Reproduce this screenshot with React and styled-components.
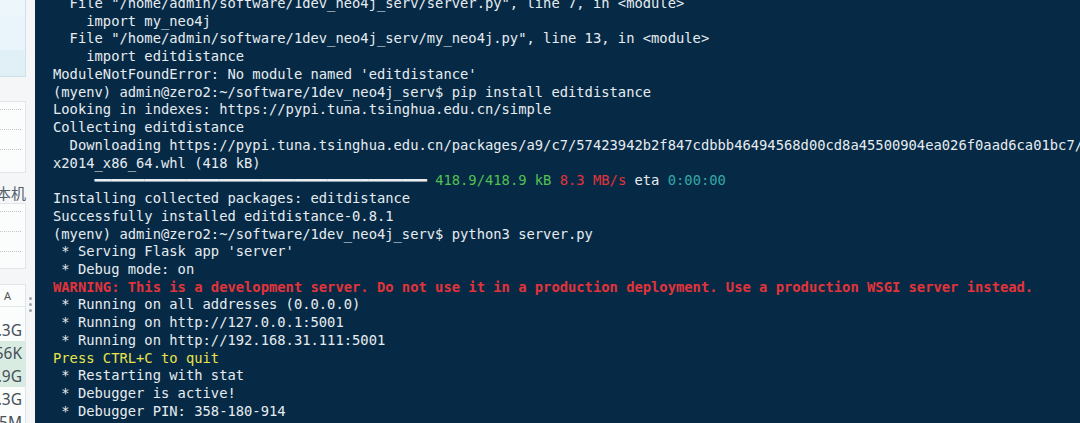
import React from 'react';
import styled, { createGlobalStyle } from 'styled-components';

const GlobalStyle = createGlobalStyle`
  html, body {
    margin: 0;
    padding: 0;
    background: #062a45;
  }
`;

const Page = styled.div`
  display: flex;
  width: 1080px;
  height: 423px;
  overflow: hidden;
`;

// left strip: the edge of a file manager window, cut off by the terminal
const SideStrip = styled.div`
  display: flex;
  flex: 0 0 35px;
  background: #f4f6f8;
  overflow: hidden;
`;

const SideColumn = styled.div`
  display: flex;
  flex-direction: column;
  align-items: flex-end;
  width: 26px;
  font-family: "Noto Sans", "Noto Sans CJK SC", sans-serif;
  color: #4a525b;
`;

const Gutter = styled.div`
  flex: 1;
  display: flex;
  flex-direction: column;
  align-items: center;
  padding-top: 297px;
  gap: 3px;
`;

const GripDot = styled.span`
  width: 3px;
  height: 3px;
  border-radius: 50%;
  background: #9aa3ab;
`;

const SelectedPanel = styled.div`
  flex: 0 0 auto;
  width: 80px;
  height: 76px;
  display: flex;
  flex-direction: column;
  background: #e4f1f8;
  border-right: 1px solid #cfe0ea;
  border-bottom: 1px solid #cfe0ea;
`;

const PanelBand = styled.div`
  height: ${(p) => p.h}px;
  background: ${(p) => p.bg};
`;

const FieldBox = styled.div`
  flex: 0 0 auto;
  width: 80px;
  height: ${(p) => p.h}px;
  margin-top: ${(p) => p.mt}px;
  box-sizing: border-box;
  display: flex;
  flex-direction: column;
  align-items: flex-end;
  gap: 19px;
  padding: 7px 4px 0 0;
  background: #fbfcfc;
  border: 1px solid #e2e6e9;
`;

const DottedLine = styled.div`
  width: 22px;
  border-top: 1px dotted #bfc6cc;
`;

const SideLabel = styled.div`
  margin-top: 10px;
  font-size: 15px;
  line-height: 20px;
  color: #56606a;
  white-space: nowrap;
`;

const SizeTable = styled.div`
  margin-top: 15px;
  width: 80px;
  display: flex;
  flex-direction: column;
  border-top: 1px solid #e1e5e8;
  border-right: 1px solid #e1e5e8;
  background: #fbfcfc;
`;

const SizeHeader = styled.div`
  height: 21px;
  display: flex;
  align-items: center;
  justify-content: flex-end;
  padding-right: 14px;
  font-size: 11px;
  color: #555;
  border-bottom: 1px solid #e4e7ea;
  margin-bottom: 11px;
`;

const SizeRow = styled.div`
  height: 23px;
  display: flex;
  align-items: center;
  justify-content: flex-end;
  padding-right: 3px;
  font-size: 15.5px;
  color: #474f58;
  white-space: nowrap;
  background: ${(p) => (p.hl ? '#d9ece2' : 'transparent')};
`;

// terminal
const Terminal = styled.div`
  flex: 1;
  background: #062a45;
  padding-left: 18px;
  overflow: hidden;
`;

const Screen = styled.div`
  margin-top: -5px;
  font-family: "DejaVu Sans Mono", "Liberation Mono", monospace;
  font-size: 13.8px;
  line-height: 17.74px;
  color: #e6ecf1;
`;

const Line = styled.div`
  white-space: pre;
  height: 17.74px;
`;

const Seg = styled.span`
  color: ${(p) => p.color || 'inherit'};
  font-weight: ${(p) => (p.bold ? 700 : 400)};
`;

const RED = '#e3333a';
const GREEN = '#52c152';
const TEAL = '#33a7a6';
const YELLOW = '#e9e24c';
const BAR = '#e8eef2';

const bar = '━'.repeat(40);

const lines = [
  [{ t: '  File "/home/admin/software/1dev_neo4j_serv/server.py", line 7, in <module>' }],
  [{ t: '    import my_neo4j' }],
  [{ t: '  File "/home/admin/software/1dev_neo4j_serv/my_neo4j.py", line 13, in <module>' }],
  [{ t: '    import editdistance' }],
  [{ t: "ModuleNotFoundError: No module named 'editdistance'" }],
  [{ t: '(myenv) admin@zero2:~/software/1dev_neo4j_serv$ pip install editdistance' }],
  [{ t: 'Looking in indexes: https://pypi.tuna.tsinghua.edu.cn/simple' }],
  [{ t: 'Collecting editdistance' }],
  [{ t: '  Downloading https://pypi.tuna.tsinghua.edu.cn/packages/a9/c7/57423942b2f847cdbbb46494568d00cd8a45500904ea026f0aad6ca01bc7/editdistance-0.8.1-cp311-cp311-manylinux_2_17_x86_64.manylinu' }],
  [{ t: 'x2014_x86_64.whl (418 kB)' }],
  [
    { t: '     ' },
    { t: bar, color: BAR },
    { t: ' ' },
    { t: '418.9/418.9 kB', color: GREEN },
    { t: ' ' },
    { t: '8.3 MB/s', color: RED },
    { t: ' eta ' },
    { t: '0:00:00', color: TEAL },
  ],
  [{ t: 'Installing collected packages: editdistance' }],
  [{ t: 'Successfully installed editdistance-0.8.1' }],
  [{ t: '(myenv) admin@zero2:~/software/1dev_neo4j_serv$ python3 server.py' }],
  [{ t: " * Serving Flask app 'server'" }],
  [{ t: ' * Debug mode: on' }],
  [{ t: 'WARNING: This is a development server. Do not use it in a production deployment. Use a production WSGI server instead.', color: RED, bold: true }],
  [{ t: ' * Running on all addresses (0.0.0.0)' }],
  [{ t: ' * Running on http://127.0.0.1:5001' }],
  [{ t: ' * Running on http://192.168.31.111:5001' }],
  [{ t: 'Press CTRL+C to quit', color: YELLOW }],
  [{ t: ' * Restarting with stat' }],
  [{ t: ' * Debugger is active!' }],
  [{ t: ' * Debugger PIN: 358-180-914' }],
];

const sizes = [
  { v: '1.3G' },
  { v: '256K', hl: true },
  { v: '1.9G', hl: true },
  { v: '1.3G' },
  { v: '15M' },
];

export default function App() {
  return (
    <>
      <GlobalStyle />
      <Page>
        <SideStrip>
          <SideColumn>
            <SelectedPanel>
              <PanelBand h={16} bg="#edf6fb" />
              <PanelBand h={34} bg="#e9f5fb" />
              <PanelBand h={26} bg="#e1eff7" />
            </SelectedPanel>
            <FieldBox h={72} mt={24}>
              <DottedLine />
              <DottedLine />
              <DottedLine />
            </FieldBox>
            <SideLabel>本机</SideLabel>
            <FieldBox h={66} mt={0}>
              <DottedLine />
              <DottedLine />
              <DottedLine />
            </FieldBox>
            <SizeTable>
              <SizeHeader>A</SizeHeader>
              {sizes.map((s, i) => (
                <SizeRow key={i} hl={s.hl}>{s.v}</SizeRow>
              ))}
            </SizeTable>
          </SideColumn>
          <Gutter>
            <GripDot />
            <GripDot />
            <GripDot />
          </Gutter>
        </SideStrip>
        <Terminal>
          <Screen>
            {lines.map((segs, i) => (
              <Line key={i}>
                {segs.map((s, j) => (
                  <Seg key={j} color={s.color} bold={s.bold}>{s.t}</Seg>
                ))}
              </Line>
            ))}
          </Screen>
        </Terminal>
      </Page>
    </>
  );
}
